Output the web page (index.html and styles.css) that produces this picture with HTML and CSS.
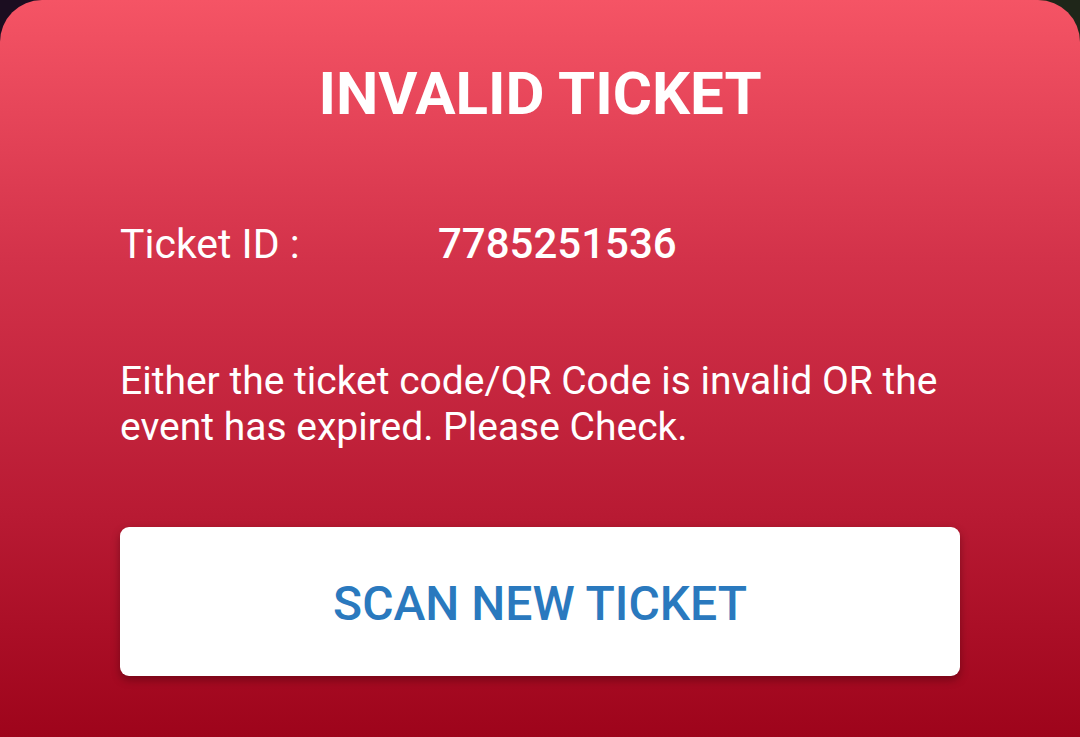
FILE: index.html
```html
<!DOCTYPE html>
<html lang="en">
<head>
    <meta charset="UTF-8">
    <meta name="viewport" content="width=device-width, initial-scale=1.0">
    <title>Ticket Scanner</title>
    <link rel="stylesheet" href="styles.css">
</head>
<body>
    <!-- Result card -->
    <div class="card">
        <h1 class="title">INVALID TICKET</h1>

        <div class="ticket-row">
            <span class="label">Ticket ID :</span>
            <span class="value">7785251536</span>
        </div>

        <p class="message">Either the ticket code/QR Code is invalid OR the event has expired. Please Check.</p>

        <button class="scan-btn">SCAN NEW TICKET</button>
    </div>
</body>
</html>
```

FILE: styles.css
```css
/* General body styling */
html {
    background: linear-gradient(to right, #1b0d20 0%, #1b0d20 50%, #1f2619 50%, #1f2619 100%);
}

body {
    font-family: Roboto, 'Noto Sans', sans-serif;
    margin: 0;
    padding: 0;
    overflow: hidden;
    height: 737px;
}

/* Red card */
.card {
    height: 737px;
    border-radius: 42px 42px 0 0;
    background: linear-gradient(to bottom, #f55465 0%, #d3324a 35%, #b81a33 70%, #9e041b 100%);
    color: #ffffff;
    padding: 59px 120px 0 120px;
    box-sizing: border-box;
}

/* Heading */
.title {
    margin: 0;
    font-size: 60px;
    line-height: 70px;
    font-weight: 700;
    text-align: center;
}

/* Ticket id row */
.ticket-row {
    display: grid;
    grid-template-columns: 318px 1fr;
    margin-top: 91px;
    font-size: 41px;
    line-height: 48px;
}

.ticket-row .value {
    font-size: 42px;
    font-weight: 500;
}

/* Message */
.message {
    margin: 90px 0 0 0;
    font-size: 39px;
    line-height: 46px;
}

/* Button */
.scan-btn {
    display: block;
    width: 100%;
    height: 149px;
    margin-top: 77px;
    padding: 4px 0 0 0;
    background: #ffffff;
    color: #2a79be;
    border: none;
    border-radius: 9px;
    font-family: Roboto, sans-serif;
    font-size: 48px;
    font-weight: 500;
    box-shadow: 0px 4px 8px rgba(60, 0, 10, 0.45);
    cursor: pointer;
}
```
